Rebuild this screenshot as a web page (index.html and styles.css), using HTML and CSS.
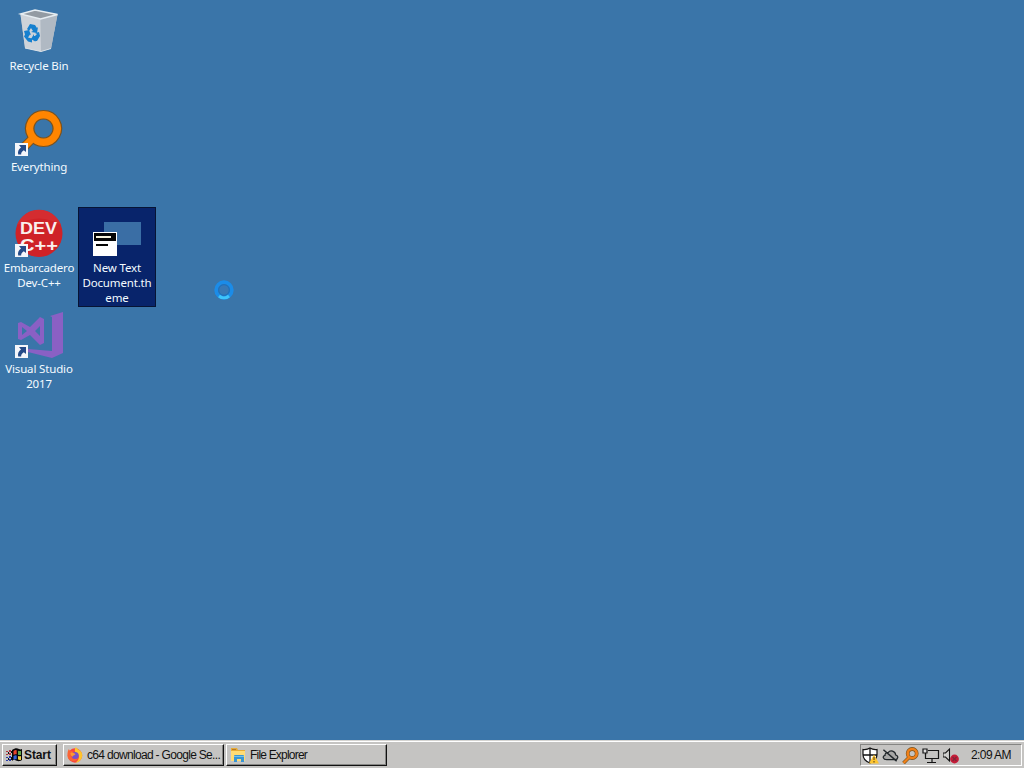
FILE: index.html
```
<!DOCTYPE html>
<html lang="en">
<head>
    <meta charset="UTF-8">
    <title>Desktop</title>
    <link rel="stylesheet" href="styles.css">
</head>
<body>
    <svg width="0" height="0" class="defs">
        <defs>
            <symbol id="shortcut" viewBox="0 0 13 13">
                <path d="M0 0h13v13H0z" fill="#f4f6fa"/>
                <path d="M4 2h7v7L8.800 7.200C6.800 8.500 6 9.500 6.200 11.500H3.200C2.400 8.500 4 6 6 4.600z" fill="#254b88"/>
            </symbol>
            <symbol id="magnifier" viewBox="0 0 48 48">
                <path d="M20 28L7 41" stroke="#79521f" stroke-width="9"/>
                <path fill-rule="evenodd" d="M28.500 2.500a18 18 0 1 0 .1 0zm0 8.500a9.500 9.500 0 1 1-.1 0z" fill="#ff8500" stroke="#79521f" stroke-width="1.200"/>
                <path d="M20 28L7 41" stroke="#ff8500" stroke-width="7"/>
            </symbol>
        </defs>
    </svg>

    <main class="desktop">
        <div class="icon bin">
            <svg class="picture" viewBox="0 0 48 48">
                <path d="M5.500 7L10 41l16 3.500 10-3L42.500 7.500 20 3z" fill="#c3cad2"/>
                <path d="M5.500 7l20 5L26 44.500 10 41z" fill="#ced3d9"/>
                <path d="M25.500 12l17-4.500L36 41.500l-10 3z" fill="#b0b9c3"/>
                <path d="M5.500 7L20 3l22.500 4.500-17 4.500z" fill="#939ba3" stroke="#e6edf2" stroke-width="1.300"/>
                <path d="M10 41l16 3.500 10-3" fill="none" stroke="#d8e0e7"/>
                <g fill="#1680cf">
                    <path d="M12 22l3-5 5 1 2 3 1-1-1 6-6-1 2-1-2-3-2 3z"/>
                    <path d="M9 24l5-1 2 5-1-.5-2 3 4 1v4l-4-1-4-5 1-2z"/>
                    <path d="M20 26l4-1 1 4-3 5h-2l1 1-5-3 3-5v2h1l2-2z"/>
                </g>
            </svg>
            <span class="label">Recycle Bin</span>
        </div>
        <div class="icon search">
            <svg class="picture" viewBox="0 0 48 48">
                <use href="#magnifier"/>
                <use href="#shortcut" x="0" y="35" width="13" height="13"/>
            </svg>
            <span class="label">Everything</span>
        </div>
        <div class="icon dev">
            <svg class="picture" viewBox="0 0 48 48">
                <circle cx="24" cy="24.500" r="23.500" fill="#cf2227"/>
                <path d="M2 16A23.500 23.500 0 0 1 46 16Q24 3 2 16z" fill="#d42c30"/>
                <text x="5" y="25" textLength="37" lengthAdjust="spacingAndGlyphs" class="dev-text">DEV</text>
                <text x="5" y="41.500" textLength="38" lengthAdjust="spacingAndGlyphs" class="dev-text">C++</text>
                <use href="#shortcut" x="0" y="35" width="13" height="13"/>
            </svg>
            <span class="label">Embarcadero Dev-C++</span>
        </div>
        <div class="icon vs">
            <svg class="picture" viewBox="0 0 48 48">
                <g fill="#8a60c4">
                    <path d="M35 6l13-4v41l-11 5-24-6v-3l24 2V7z"/>
                    <path fill-rule="evenodd" d="M3 13l3-1 9 5L25 7l4 2v24l-4 2-10-10-9 5-3-1zm4 4v8l5-4zm18-1l-5 5 5 5z"/>
                </g>
                <use href="#shortcut" x="0" y="35" width="13" height="13"/>
            </svg>
            <span class="label">Visual Studio 2017</span>
        </div>
        <div class="icon theme selected">
            <svg class="picture" viewBox="0 0 48 48" shape-rendering="crispEdges">
                <path d="M11 13h37v23H11z" fill="#3a6ea5"/>
                <path d="M0 23h24v24H0z" fill="#fff"/>
                <path d="M1 24h22v8H1z" fill="#050505"/>
                <path d="M3 27h15v2H3z" fill="#f7f4df"/>
                <path d="M3 35h12v2H3z" fill="#050505"/>
            </svg>
            <span class="label">New Text Document.th eme</span>
        </div>
    </main>

    <svg class="cursor" viewBox="0 0 22 22">
        <circle cx="11" cy="11" r="7.900" fill="none" stroke="#1b8ce8" stroke-width="3.600"/>
        <circle cx="11" cy="11" r="5.300" fill="#3978b4" stroke="#1770c4" stroke-width="1"/>
        <path d="M6 17a7.700 7.700 0 0 0 10 0" fill="none" stroke="#3dc4fb" stroke-width="3"/>
    </svg>

    <footer class="taskbar">
        <button class="button start">
            <svg width="17" height="16" viewBox="0 0 17 16">
                <path d="M6 3c3-2 5-2 7-1 1 .5 2 .5 3 0v11c-3 2-5 1-7 0-1-.5-2 0-3 1z" fill="#080808"/>
                <path d="M7.500 4q2-1.300 3.200-.7v4q-1.500-.5-3.200.5z" fill="#e9442d"/>
                <path d="M12 3.700q1.500.7 3 .2v4q-1.500.5-3-.2z" fill="#62a84a"/>
                <path d="M7.500 9q2-1 3.200-.5v3.800q-1.500-.5-3.200.5z" fill="#3261da"/>
                <path d="M12 8.900q1.500.7 3 .2v3.700q-1.500.5-3-.3z" fill="#f3cf42"/>
                <path d="M0 4h2v1H0zm3-1h2v2H3zM0 7h2v1H0zm3-1h2v2H3z" fill="#b43940"/>
                <path d="M0 10h2v1H0zm3-1h2v2H3zM0 13h2v1H0zm3-1h2v2H3z" fill="#293caa"/>
                <path d="M2 5h1v2H2zm3-1h1v2H5zM2 11h1v2H2zm3-1h1v3H5z" fill="#111"/>
            </svg>
            <span>Start</span>
        </button>
        <button class="button task">
            <svg width="16" height="16" viewBox="0 0 16 16">
                <circle cx="8" cy="8.500" r="7.200" fill="#f7463f"/>
                <path d="M9 0c1 3 6 3 6.300 8 .1 4-3 7.500-7 7.700C13 13 13 7 9 6 7 4 8 1 9 0z" fill="#ffc52c"/>
                <path d="M2 2c0 2 2 2 4 2L4 7c-1 4 3 6 7 4-2 5-10 4-10.500-2C.3 6 1 3 2 2z" fill="#fb6333"/>
                <circle cx="8.200" cy="8.600" r="3.500" fill="#7651cc"/>
                <path d="M3.500 6c2-1 3 0 5 1-1 2-3 1-3 3-2-1-2-3-2-4z" fill="#ff9830"/>
            </svg>
            <span class="browser-title">c64 download - Google Se...</span>
        </button>
        <button class="button task">
            <svg width="16" height="16" viewBox="0 0 16 16">
                <path d="M1 1h6l1 2h7v11H1z" fill="#e7ac36"/>
                <path d="M1 4h14v10H1z" fill="#ffdc74"/>
                <path d="M2 2h4v1H2z" fill="#b57829"/>
                <path d="M4 15V9q0-1 1-1h8q1 0 1 1v6h-3v-3H7v3z" fill="#3795d4"/>
                <path d="M4 9h10v1H4z" fill="#76bfe5"/>
            </svg>
            <span class="explorer-title">File Explorer</span>
        </button>
        <div class="tray">
            <svg width="17" height="17" viewBox="0 0 17 17">
                <path d="M8 1q3 2 7 1.500v5q0 6-7 8.500-7-2.500-7-8.500v-5Q5 3 8 1z" fill="#fff" stroke="#111" stroke-width="1.200"/>
                <path d="M8 1v15M1 8h14" stroke="#111" stroke-width="1.300"/>
                <path d="M12 7.500l5 9H7z" fill="#ffc52e"/>
                <path d="M12 10v3m0 1v1.500" stroke="#4c3a18"/>
            </svg>
            <svg width="17" height="16" viewBox="0 0 18 16">
                <path d="M5 13h9c3 0 4-4 .5-5C14 4 9 2 6.500 5.500 4 5 3 7 3.200 8.500 0 9 1 13 5 13z" fill="#a7a7a6" stroke="#20262a" stroke-width="1.300"/>
                <path d="M1.500 2.500l14 12" stroke="#20262a" stroke-width="1.500"/>
            </svg>
            <svg width="17" height="17" viewBox="0 0 17 17">
                <path d="M7 10.500L1.500 16" stroke="#79521f" stroke-width="3.600"/>
                <circle cx="10.200" cy="6.500" r="4.500" fill="none" stroke="#79521f" stroke-width="3.800"/>
                <circle cx="10.200" cy="6.500" r="4.500" fill="none" stroke="#f08019" stroke-width="2.600"/>
                <path d="M7.500 10L1.500 16" stroke="#f08019" stroke-width="2.400"/>
            </svg>
            <svg width="18" height="17" viewBox="0 0 18 17">
                <path d="M6 3.500h10.500v8H3.500V7M10 12v3M5 15.500h9" fill="none" stroke="#151515" stroke-width="1.200"/>
                <path d="M1 2h4v4H1zM3.500 6v2" fill="#ddd" stroke="#151515" stroke-width="1.200"/>
            </svg>
            <svg width="17" height="17" viewBox="0 0 17 17">
                <path d="M0 6h2.500L6.500 2v12l-4-4H0z" fill="#d0d0ce" stroke="#151515" stroke-width="1.100"/>
                <circle cx="11.500" cy="12" r="4.400" fill="#c51c38"/>
                <path d="M9.500 10l4 4m0-4l-4 4" stroke="#7f2638" stroke-width="1.200"/>
            </svg>
            <span class="clock">2:09 AM</span>
        </div>
    </footer>
</body>
</html>
```

FILE: styles.css
```
:root {
    --desktop: #3a75a9;
    --face: #c5c4c2;
    --selected: #08246b;
}

* {
    box-sizing: border-box;
}

body {
    margin: 0;
    width: 1024px;
    height: 768px;
    display: flex;
    flex-direction: column;
    background: var(--desktop);
    overflow: hidden;
}

.defs {
    position: absolute;
}

.desktop {
    flex: 1;
    display: grid;
    grid-template-columns: 78px 78px;
    grid-template-rows: repeat(4, 101px);
    padding-top: 5px;
    align-content: start;
}

.icon {
    grid-column: 1;
    height: 100px;
    padding-top: 2px;
    display: flex;
    flex-direction: column;
    align-items: center;
    color: #f4fbff;
    font: 11.5px/15px "Noto Sans", sans-serif;
    letter-spacing: -0.15px;
    text-align: center;
}

.picture {
    width: 48px;
    height: 48px;
    flex-shrink: 0;
}

.label {
    width: 74px;
    margin-top: 3px;
}

.theme {
    grid-column: 2;
    grid-row: 3;
}

.selected {
    padding-top: 1px;
    border: 1px solid #071434;
    background: var(--selected);
}

.dev-text {
    font: bold 17px "Liberation Sans", Arial, sans-serif;
    letter-spacing: 0;
    fill: #faefed;
}

.cursor {
    position: absolute;
    left: 213px;
    top: 279px;
    width: 22px;
    height: 22px;
}

.taskbar {
    height: 28px;
    padding: 3px 2px 2px;
    display: flex;
    align-items: stretch;
    background: var(--face);
    border-top: 1px solid #d5d4d1;
    box-shadow: inset 0 1px #fff;
    font: 12px "Liberation Sans", Arial, sans-serif;
}

.button {
    display: flex;
    align-items: center;
    padding: 0 3px;
    border: 1px solid;
    border-color: #fff #111 #111 #fff;
    box-shadow: inset -1px -1px #858583;
    background: var(--face);
    color: #111;
    font: inherit;
    white-space: nowrap;
}

.button svg {
    flex-shrink: 0;
}

.start {
    width: 55px;
    margin-right: 6px;
    font-weight: bold;
    letter-spacing: -0.1px;
}

.start span {
    margin-left: 1px;
}

.task {
    width: 161px;
    margin-right: 2px;
}

.task span {
    margin-left: 4px;
}

.browser-title {
    letter-spacing: -0.68px;
}

.explorer-title {
    letter-spacing: -0.8px;
}

.tray {
    width: 162px;
    margin-left: auto;
    padding-left: 1px;
    display: flex;
    align-items: center;
    gap: 3px;
    border: 1px solid;
    border-color: #858583 #fff #fff #858583;
    color: #111;
}

.clock {
    margin-left: 8px;
    letter-spacing: -0.6px;
    white-space: nowrap;
}
```
